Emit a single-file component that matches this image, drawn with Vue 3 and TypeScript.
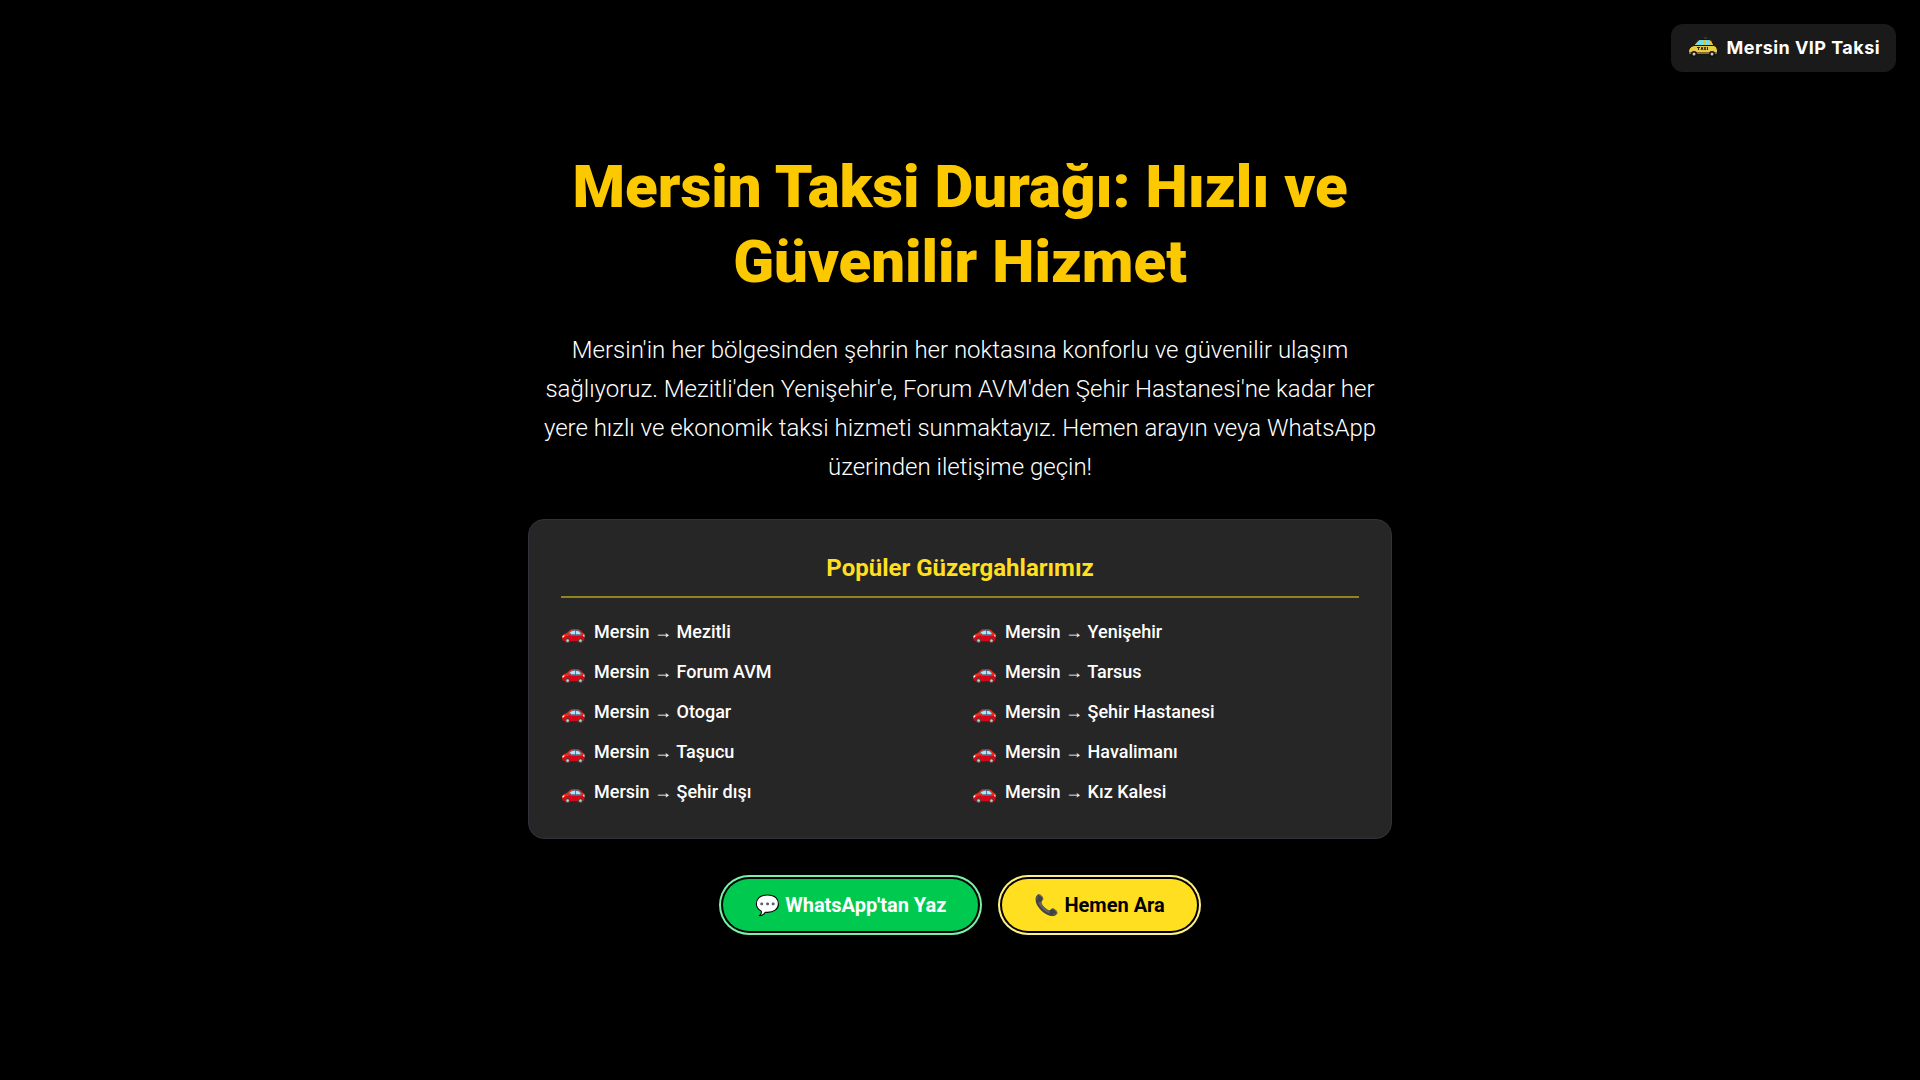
<script setup lang="ts">
const routes: string[] = [
  'Mezitli',
  'Yenişehir',
  'Forum AVM',
  'Tarsus',
  'Otogar',
  'Şehir Hastanesi',
  'Taşucu',
  'Havalimanı',
  'Şehir dışı',
  'Kız Kalesi',
]
</script>

<template>
  <div class="page">
    <header class="brand">
      <svg class="brand-icon" viewBox="0 0 32 32" aria-hidden="true">
        <path d="M17 8 V5 H20 V8" fill="#4a4030" stroke="#26211a" />
        <path d="M6 14 L11 8.500 Q12 7.500 14 7.500 H22 Q24 7.500 25 9.500 L27.500 14.500 Z" fill="#e3c03a" stroke="#15130a" />
        <path d="M8.500 13.500 L12.500 8 H16.500 V13.500 Z" fill="#6fdcec" />
        <path d="M18 8 H21.500 L23 13 H18 Z" fill="#6fdcec" />
        <path d="M1.500 20 Q1.500 15 7 13.500 H27 Q30 14 30.500 18 V22 H1.500 Z" fill="#e8cb48" stroke="#15130a" />
        <rect x="2" y="20" width="28" height="2" fill="#8a6c28" />
        <path d="M10 15.500 H13 M11.500 15 V18 M14 18 L15 15 L16 18 M17 15 L19 18 M19 15 L17 18 M20.500 15 V18" fill="none" stroke="#2b250c" />
        <circle cx="7" cy="22" r="3" fill="#14110d" />
        <circle cx="7" cy="22" r="1.500" fill="#c9c9d2" />
        <circle cx="25" cy="22" r="3" fill="#14110d" />
        <circle cx="25" cy="22" r="1.500" fill="#c9c9d2" />
      </svg>
      <span>Mersin VIP Taksi</span>
    </header>

    <main class="hero">
      <h1>Mersin Taksi Durağı: Hızlı ve Güvenilir Hizmet</h1>
      <p class="lead">
        Mersin'in her bölgesinden şehrin her noktasına konforlu ve güvenilir ulaşım
        sağlıyoruz. Mezitli'den Yenişehir'e, Forum AVM'den Şehir Hastanesi'ne kadar her
        yere hızlı ve ekonomik taksi hizmeti sunmaktayız. Hemen arayın veya WhatsApp
        üzerinden iletişime geçin!
      </p>

      <section class="card">
        <h2>Popüler Güzergahlarımız</h2>
        <ul class="routes">
          <li v-for="route in routes" :key="route">
            <span class="car">🚗</span>
            <span>Mersin → {{ route }}</span>
          </li>
        </ul>
      </section>

      <div class="actions">
        <a class="btn whatsapp" href="#whatsapp">💬 WhatsApp'tan Yaz</a>
        <a class="btn call" href="#ara">📞 Hemen Ara</a>
      </div>
    </main>
  </div>
</template>

<style>
body {
  margin: 0;
  background: #000;
}
</style>

<style scoped>
* {
  box-sizing: border-box;
}

.page {
  min-height: 100vh;
  display: flex;
  align-items: center;
  justify-content: center;
  background: #000;
  color: #fff;
  font-family: Roboto, sans-serif;
}

.brand {
  position: absolute;
  top: 24px;
  right: 24px;
  display: flex;
  align-items: center;
  gap: 8px;
  padding: 8px 16px;
  border-radius: 12px;
  background: #1a1a1a;
  font: 700 18px/28px Inter, sans-serif;
  letter-spacing: 0.025em;
}

.brand-icon {
  width: 32px;
  height: 32px;
}

.hero {
  width: 100%;
  max-width: 896px;
  padding: 0 16px;
  text-align: center;
}

h1 {
  margin: 0 0 32px;
  color: #fcc800;
  font-size: 60px;
  line-height: 75px;
  font-weight: 900;
}

.lead {
  margin: 0 0 32px;
  color: #fff;
  font-size: 24px;
  line-height: 39px;
  font-weight: 300;
}

.card {
  margin-bottom: 40px;
  padding: 32px;
  border: 1px solid #30333a;
  border-radius: 16px;
  background: #262626;
}

h2 {
  margin: 0 0 20px;
  padding-bottom: 12px;
  border-bottom: 2px solid #94821f;
  color: #ffdf20;
  font-size: 24px;
  line-height: 32px;
  font-weight: 700;
}

.routes {
  display: grid;
  grid-template-columns: 1fr 1fr;
  gap: 12px 24px;
  margin: 0;
  padding: 0;
  list-style: none;
  font-size: 18px;
  line-height: 28px;
  font-weight: 500;
}

.routes li {
  display: flex;
  align-items: center;
  gap: 8px;
}

.car {
  font-size: 20px;
}

.actions {
  display: flex;
  flex-wrap: wrap;
  justify-content: center;
  gap: 24px;
}

.btn {
  padding: 12px 32px;
  border-radius: 26px;
  font-size: 20px;
  line-height: 28px;
  font-weight: 700;
  text-decoration: none;
}

.whatsapp {
  background: #00c950;
  color: #fff;
  box-shadow: 0 0 0 2px #000, 0 0 0 4px #7bf1a8;
}

.call {
  background: #ffdf20;
  color: #000;
  box-shadow: 0 0 0 2px #000, 0 0 0 4px #fff085;
}
</style>
